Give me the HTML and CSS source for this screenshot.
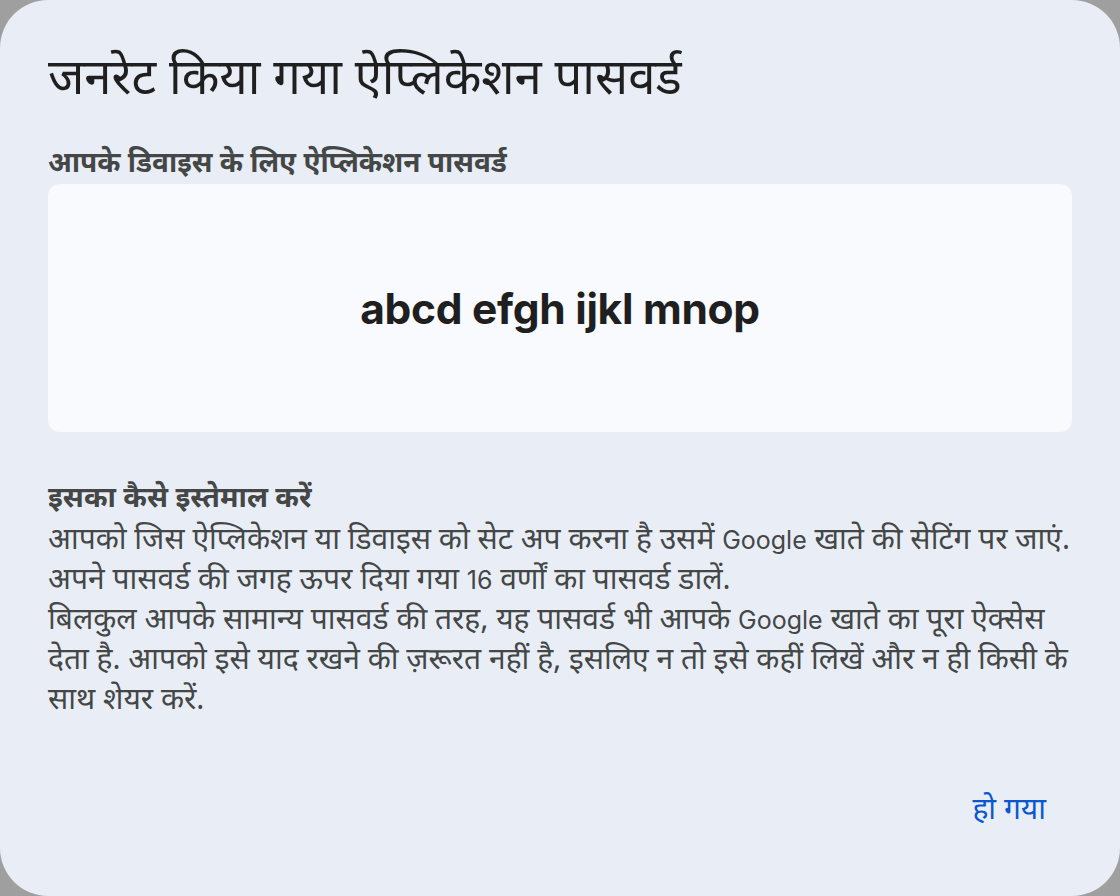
FILE: index.html
```html
<!DOCTYPE html>
<html lang="hi">
<head>
<meta charset="utf-8">
<link rel="stylesheet" href="styles.css">
</head>
<body>
<div class="dialog">
  <h1 class="title">जनरेट किया गया ऐप्लिकेशन पासवर्ड</h1>
  <div class="label">आपके डिवाइस के लिए ऐप्लिकेशन पासवर्ड</div>
  <div class="pwbox"><span class="pw">abcd efgh ijkl mnop</span></div>
  <div class="howto">
    <div class="howtitle">इसका कैसे इस्तेमाल करें</div>
    <p class="body">आपको जिस ऐप्लिकेशन या डिवाइस को सेट अप करना है उसमें <span class="latin">Google</span> खाते की सेटिंग पर जाएं.<br>अपने पासवर्ड की जगह ऊपर दिया गया <span class="latin">16</span> वर्णों का पासवर्ड डालें.<br>बिलकुल आपके सामान्य पासवर्ड की तरह, यह पासवर्ड भी आपके <span class="latin">Google</span> खाते का पूरा ऐक्सेस देता है. आपको इसे याद रखने की ज़रूरत नहीं है, इसलिए न तो इसे कहीं लिखें और न ही किसी के साथ शेयर करें.</p>
  </div>
  <div class="actions"><button class="done">हो गया</button></div>
</div>
</body>
</html>
```
FILE: styles.css
```css
html, body {
  margin: 0;
  padding: 0;
  background: #9f9f9f;
  width: 1120px;
  height: 896px;
  overflow: hidden;
}
.dialog {
  box-sizing: border-box;
  width: 1120px;
  height: 896px;
  background: #e9eef6;
  border-radius: 48px;
  padding: 50px 46px 0 48px;
  display: flex;
  flex-direction: column;
  font-family: "Noto Sans Devanagari", "Noto Sans", sans-serif;
  color: #444746;
}
.title {
  margin: 0;
  font-size: 49px;
  font-weight: 400;
  line-height: 64px;
  color: #1f1f1f;
}
.label {
  margin-top: 33px;
  font-size: 28px;
  font-weight: 700;
  line-height: 36px;
  color: #444746;
}
.pwbox {
  margin-top: 1px;
  margin-right: 2px;
  height: 248px;
  flex-shrink: 0;
  background: #f8fafd;
  border-radius: 12px;
  display: flex;
  align-items: center;
  justify-content: center;
}
.pw {
  font-family: "Inter", "Roboto", sans-serif;
  font-weight: 700;
  font-size: 42.5px;
  color: #1f1f1f;
  letter-spacing: -0.3px;
}
.howto {
  margin-top: 48px;
}
.howtitle {
  font-size: 28.5px;
  font-weight: 700;
  line-height: 40px;
  color: #444746;
}
.body {
  margin: 2px 0 0 0;
  font-size: 30px;
  line-height: 40px;
  color: #444746;
}
.latin {
  font-family: "Inter", "Roboto", sans-serif;
  font-size: 25px;
  line-height: 1;
}
.actions {
  margin-top: auto;
  margin-bottom: 64px;
  display: flex;
  justify-content: flex-end;
  padding-right: 28px;
}
.done {
  background: none;
  border: none;
  padding: 0;
  font-family: "Noto Sans Devanagari", "Noto Sans", sans-serif;
  font-size: 30px;
  color: #0b57d0;
  line-height: 40px;
}
```
